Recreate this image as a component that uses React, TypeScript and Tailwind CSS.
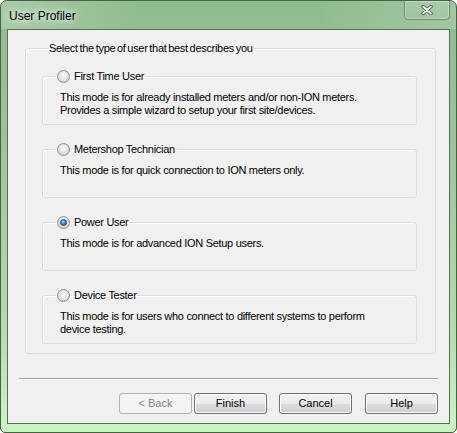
import React, { useState } from 'react';

type Mode = {
  id: string;
  label: string;
  text: string[];
};

const modes: Mode[] = [
  {
    id: 'first',
    label: 'First Time User',
    text: [
      'This mode is for already installed meters and/or non-ION meters.',
      'Provides a simple wizard to setup your first site/devices.',
    ],
  },
  {
    id: 'metershop',
    label: 'Metershop Technician',
    text: ['This mode is for quick connection to ION meters only.'],
  },
  {
    id: 'power',
    label: 'Power User',
    text: ['This mode is for advanced ION Setup users.'],
  },
  {
    id: 'tester',
    label: 'Device Tester',
    text: [
      'This mode is for users who connect to different systems to perform',
      'device testing.',
    ],
  },
];

// Win7 style radio bullet
const Radio: React.FC<{ checked: boolean }> = ({ checked }) => (
  <span className="w-[13px] h-[13px] rounded-full border border-[#8e8f8f] bg-[radial-gradient(circle_at_50%_40%,#fbfbfb,#d6d6d6_75%,#c4c4c4)] flex items-center justify-center shrink-0">
    {checked && (
      <span className="w-[7px] h-[7px] rounded-full bg-[radial-gradient(circle_at_40%_35%,#a6dcff,#2a79c4_55%,#0c3f82)] border border-[#17457c]" />
    )}
  </span>
);

const Button: React.FC<{ label: string; disabled?: boolean; className?: string }> = ({
  label,
  disabled,
  className = '',
}) =>
  disabled ? (
    <button
      disabled
      className={`w-[73px] h-[21px] rounded-[3px] border border-[#adb2b5] bg-[#f4f4f4] text-[#838383] text-[11px] leading-none ${className}`}
    >
      {label}
    </button>
  ) : (
    <button
      className={`w-[73px] h-[21px] rounded-[3px] border border-[#707070] bg-[linear-gradient(#f2f2f2,#ebebeb_50%,#dddddd_50%,#cfcfcf)] shadow-[inset_0_0_0_1px_#fcfcfc] text-black text-[11px] leading-none ${className}`}
    >
      {label}
    </button>
  );

export default function App() {
  const [selected, setSelected] = useState<string>('power');

  return (
    <div className="w-[457px] h-[433px] relative flex flex-col border border-[#4b5f4b] rounded-t-[7px] rounded-b-[5px] bg-[linear-gradient(#8fbc8e,#98c596_30%,#b2dcab_75%,#c9f7c1)] font-['Liberation_Sans',Arial,sans-serif] overflow-hidden">
      {/* title bar */}
      <div className="h-[28px] shrink-0 flex items-center pl-[8px] bg-[linear-gradient(90deg,rgba(255,255,255,0.22),rgba(255,255,255,0)_30%,rgba(255,255,255,0)_70%,rgba(255,255,255,0.15))]">
        <span className="text-[12px] text-black pt-[2px] [text-shadow:0_0_6px_#ffffff,0_0_10px_#ffffff]">
          User Profiler
        </span>
      </div>

      {/* close button */}
      <div className="absolute top-[-1px] right-[6px] w-[46px] h-[20px] rounded-b-[4px] border border-[#6e8a6e] shadow-[inset_0_0_0_1px_rgba(255,255,255,0.35)] bg-[linear-gradient(rgba(255,255,255,0.12),rgba(255,255,255,0.02))] flex items-center justify-center">
        <svg width="12" height="10" viewBox="0 0 12 10">
          <path d="M2 1.5 L10 8.5 M10 1.5 L2 8.5" stroke="#3a4a3a" strokeWidth="3.4" strokeLinecap="round" />
          <path d="M2 1.5 L10 8.5 M10 1.5 L2 8.5" stroke="#ffffff" strokeWidth="1.8" strokeLinecap="round" />
        </svg>
      </div>

      {/* client area */}
      <div className="flex-1 mx-[6px] mb-[8px] border border-[#5c6b5c] bg-[#f0f0f0] flex flex-col text-[11px] text-black tracking-[-0.3px]">
        <fieldset className="mt-[12px] ml-[17px] w-[411px] border border-[#d5dfe5] rounded-[3px] shadow-[inset_1px_1px_0_#ffffff] pl-[16px] pb-[9px]">
          <legend className="ml-[6px] px-[1px] leading-[13px] [word-spacing:-1px]">
            Select the type of user that best describes you
          </legend>
          <div className="flex flex-col gap-[18px] mt-[15px]">
            {modes.map((m) => (
              <fieldset
                key={m.id}
                onClick={() => setSelected(m.id)}
                className="w-[375px] h-[55px] border border-[#d5dfe5] rounded-[3px] shadow-[inset_1px_1px_0_#ffffff]"
              >
                <legend className="ml-[13px] px-[1px] leading-[13px]">
                  <span className="flex items-center gap-[4px]">
                    <Radio checked={selected === m.id} />
                    <span>{m.label}</span>
                  </span>
                </legend>
                <div className="pl-[17px] pt-[8px] leading-[13px]">
                  {m.text.map((t) => (
                    <div key={t}>{t}</div>
                  ))}
                </div>
              </fieldset>
            ))}
          </div>
        </fieldset>

        <div className="mt-[24px] ml-[11px] w-[419px] border-t border-t-[#a0a0a0] border-b border-b-white" />

        <div className="mt-[13px] ml-[111px] flex tracking-normal">
          <Button label="< Back" disabled />
          <Button label="Finish" className="ml-[2px]" />
          <Button label="Cancel" className="ml-[12px]" />
          <Button label="Help" className="ml-[13px]" />
        </div>
      </div>
    </div>
  );
}
